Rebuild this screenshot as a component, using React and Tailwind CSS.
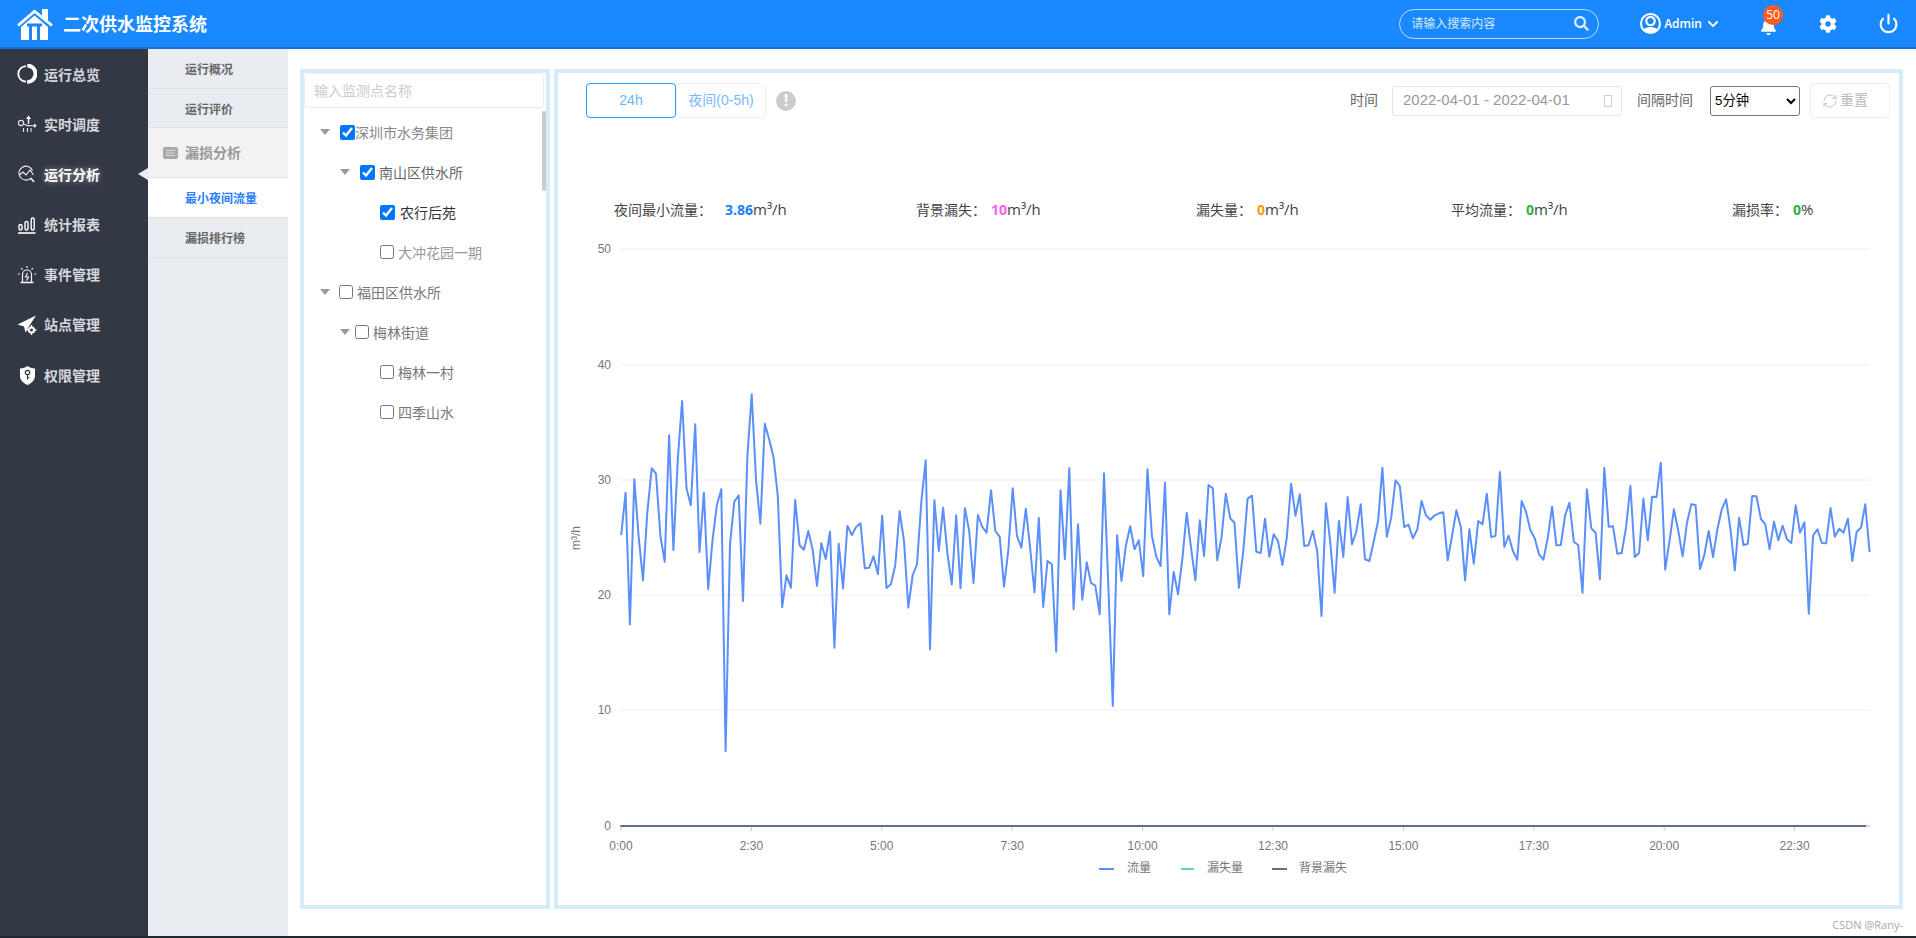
import React from 'react';
import { Power, RefreshCw } from 'lucide-react';
import { FaBell, FaChevronDown, FaCog, FaSearch } from 'react-icons/fa';

// traced flow series, screen y = 380 + a/3 for the first part, 420 + b/3 for the rest
const seriesA = [462,335,730,295,465,598,395,262,278,465,542,163,507,235,60,322,373,130,513,335,624,475,372,325,1110,490,362,343,660,225,40,300,428,128,175,228,345,678,583,620,357,493,506,450,505,615,487,534,452,800,488,622,434,462,438,427,562,560,526,580,404,621,610,552,390,480,680,582,550,360,238,805,358,510,380,520,610,403,622,382,450,606,402,438,455,328,450,467,617,505,322,465,500,383,500,634,410,678,540,550,812,328,535,262,685,430,656,544,606,614,700,277,620,975];
const seriesB = [343,480,375,316,385,358,465,145,345,407,435,185,580,453,520,415,275,380,478,298,405,192,202,418,350,218,292,305,500,390,233,224,392,396,293,407,340,360,432,350,188,284,220,375,373,330,390,585,247,365,515,300,408,228,370,332,250,415,420,360,300,140,347,290,178,195,318,311,352,325,240,283,296,283,277,274,418,345,268,318,478,325,428,300,310,218,348,345,153,378,344,390,416,240,272,327,352,400,416,350,257,373,372,282,245,362,372,515,205,322,335,475,140,317,316,398,396,320,195,408,396,233,358,227,228,125,446,360,265,330,406,305,250,252,444,402,330,408,325,265,235,325,448,290,372,369,225,226,294,310,385,302,358,314,355,366,253,335,304,578,343,325,366,367,261,347,323,335,293,420,333,320,250,393];

const flowPoints = [
  ...seriesA.map((v, i) => `${(621.2 + i * 4.35).toFixed(1)},${(380 + v / 3).toFixed(1)}`),
  ...seriesB.map((v, i) => `${(621.2 + (i + 114) * 4.35).toFixed(1)},${(420 + v / 3).toFixed(1)}`),
].join(' ');

const yTicks = [
  { label: '50', y: 248 },
  { label: '40', y: 364 },
  { label: '30', y: 479 },
  { label: '20', y: 594 },
  { label: '10', y: 709 },
];
const xTicks = ['0:00', '2:30', '5:00', '7:30', '10:00', '12:30', '15:00', '17:30', '20:00', '22:30'];

const OverviewIcon = () => (
  <svg width="20" height="20" viewBox="0 0 20 20" fill="none" stroke="#fff">
    <path d="M9 2.2A7.6 7.6 0 0 0 9 17.6" strokeWidth="1.8" />
    <path d="M11 1.5A8.3 8.3 0 0 1 11 18.3" strokeWidth="4" transform="translate(-.5 0) scale(.98)" />
  </svg>
);
const DispatchIcon = () => (
  <svg width="20" height="20" viewBox="0 0 20 20" fill="none" stroke="#e6e8ec" strokeWidth="1.1">
    <circle cx="4" cy="9" r="2.6" />
    <path d="M6.6 9.5c1.4 2 2.6 2.2 11.4 2.2" />
    <path d="M17 10l2 1.7-2 1.7" fill="#e6e8ec" />
    <path d="M11.5 10V4" strokeWidth="1.6" />
    <path d="M9 5l2.5-3.5L14 5z" fill="#fff" stroke="none" />
    <path d="M6.5 14v4M10.5 14v4M14 14v4" />
  </svg>
);
const AnalysisIcon = () => (
  <svg width="18" height="18" viewBox="0 0 18 18" fill="none" stroke="#f0f1f3" strokeWidth="1.1">
    <path d="M14.5 5.5A7 7 0 1 0 12.5 13.5" />
    <path d="M1.5 10l3.5-3 3 3 4-5 3.5 5" />
    <path d="M12.5 13l3.5 3.8" strokeWidth="1.7" />
  </svg>
);
const ReportIcon = () => (
  <svg width="20" height="20" viewBox="0 0 20 20" fill="none" stroke="#fff" strokeWidth="1.4">
    <rect x="2" y="9.5" width="3" height="5.5" rx="1.5" />
    <rect x="8" y="6.5" width="3" height="8.5" rx="1.5" />
    <rect x="14.2" y="3" width="3" height="12" rx="1.5" />
    <path d="M1 18h17.5" strokeWidth="1.6" />
  </svg>
);
const EventIcon = () => (
  <svg width="20" height="20" viewBox="0 0 20 20" fill="none" stroke="#f0f1f3" strokeWidth="1.2">
    <path d="M5.5 17V9.5a4.5 4.5 0 0 1 9 0V17" />
    <path d="M3.5 17.5h13" strokeWidth="1.6" />
    <path d="M10.6 8L8.5 12h3l-2 3.5" />
    <path d="M10 1v2M4.2 3l1.2 1.6M15.8 3l-1.2 1.6M.8 9h2M17.2 9h2" />
  </svg>
);
const SiteIcon = () => (
  <svg width="20" height="20" viewBox="0 0 20 20">
    <path d="M19 .5L.5 9.5l6.5 2 1.5 6 2.5-4.5L19 .5z" fill="#fff" />
    <circle cx="14.5" cy="15" r="3.6" fill="#fff" />
    <circle cx="14.5" cy="15" r="1.5" fill="#333845" />
    <path d="M14.5 10v2M14.5 18v2M9.5 15h2M17.5 15h2" stroke="#fff" strokeWidth="1.4" />
  </svg>
);
const AuthIcon = () => (
  <svg width="15" height="19" viewBox="0 0 15 19">
    <path d="M7.5 0C5.5 1.5 3 2.2 0 2.4v7.5c0 4 3 7 7.5 9 4.5-2 7.5-5 7.5-9V2.4C12 2.2 9.5 1.5 7.5 0z" fill="#fff" />
    <circle cx="7.5" cy="6.5" r="2.2" fill="none" stroke="#333845" strokeWidth="1.2" />
    <path d="M7.5 8.5v5M7.5 11.5h1.8" stroke="#333845" strokeWidth="1.2" />
  </svg>
);

const navItems = [
  { label: '运行总览', icon: <OverviewIcon /> },
  { label: '实时调度', icon: <DispatchIcon /> },
  { label: '运行分析', icon: <AnalysisIcon />, active: true },
  { label: '统计报表', icon: <ReportIcon /> },
  { label: '事件管理', icon: <EventIcon /> },
  { label: '站点管理', icon: <SiteIcon /> },
  { label: '权限管理', icon: <AuthIcon /> },
];

const Logo = () => (
  <svg width="38" height="33" viewBox="0 0 38 33">
    <path d="M1 17.5L18.5 2.5 26 8.5V2h6v11.5l5 4-2 2L18.5 6 3 19.5z" fill="#fff" />
    <path d="M5 20L18.5 8.5 32 20v12.5a.8.8 0 0 1-.8.8H5.8a.8.8 0 0 1-.8-.8z" fill="#fff" />
    <path d="M11 16.5h15v3h-2V33h-3V19.5h-5V33h-3V19.5h-2z" fill="#1a88ff" />
  </svg>
);

const UserIcon = () => (
  <svg width="21" height="21" viewBox="0 0 21 21">
    <circle cx="10.5" cy="10.5" r="9.5" fill="none" stroke="#fff" strokeWidth="2" />
    <circle cx="10.5" cy="8" r="4.2" fill="none" stroke="#fff" strokeWidth="2.2" />
    <path d="M3.5 16.5c2-3.5 12-3.5 14 0l-3.500 3h-7z" fill="#fff" />
  </svg>
);

const Header = () => (
  <header className="h-[49px] shrink-0 bg-[#1a88ff] border-b-2 border-[#1b6fd1] flex items-center text-white">
    <div className="ml-[16px] w-[38px] h-[33px]">
      <Logo />
    </div>
    <h1 className="ml-[9px] text-[18px] font-bold leading-none">二次供水监控系统</h1>
    <div className="ml-auto w-[200px] h-[30px] rounded-full border border-white/70 flex items-center pl-[11px] pr-[9px]">
      <span className="text-[12px] text-[#d5e8ff]">请输入搜索内容</span>
      <FaSearch className="ml-auto text-[#d5e8ff]" size={15} />
    </div>
    <div className="ml-[41px] flex items-center">
      <UserIcon />
      <span className="ml-[3px] text-[12px] font-semibold">Admin</span>
      <FaChevronDown className="ml-[5px]" size={12} />
    </div>
    <div className="relative ml-[41px] w-[17px] h-[18px] mt-[7px]">
      <FaBell size={17} />
      <span className="absolute left-[3px] top-[-13px] w-[20px] h-[20px] rounded-full bg-[#ff5a1f] text-[12px] leading-[20px] text-center">50</span>
    </div>
    <FaCog className="ml-[42px]" size={18} />
    <Power className="ml-[41px] mr-[17px]" size={21} strokeWidth={2.5} />
  </header>
);

const Sidebar = () => (
  <aside className="w-[148px] shrink-0 bg-[#333845]">
    {navItems.map((item) => (
      <div key={item.label} className="relative h-[50.17px] flex items-center">
        <span className="w-[20px] h-[20px] ml-[17px] flex items-center justify-center">{item.icon}</span>
        <span className={`ml-[7px] text-[14px] font-bold ${item.active ? 'text-white [text-shadow:0_0_6px_rgba(255,255,255,0.5)]' : 'text-[#d5d7dc]'}`}>
          {item.label}
        </span>
        {item.active && (
          <span className="absolute right-0 top-[19px] border-y-[6px] border-r-[10px] border-y-transparent border-r-[#e9ecf1]" />
        )}
      </div>
    ))}
  </aside>
);

const SubRow = ({ label, active, short }) => (
  <div className={`${short ? 'h-[39px]' : 'h-[40px]'} flex items-center pl-[37px] pt-[3px] border-b border-[#dfe2e7] text-[12px] font-bold ${active ? 'bg-white text-[#2b7cff]' : 'text-[#666]'}`}>
    {label}
  </div>
);

const SubMenu = () => (
  <nav className="w-[140px] shrink-0 bg-[#e9ecf1]">
    <SubRow label="运行概况" />
    <SubRow label="运行评价" short />
    <div className="h-[50px] bg-[#f2f2f3] border-b border-[#e4e4e6] flex items-center pl-[15px] text-[14px] font-bold text-[#999]">
      <svg width="15" height="12" viewBox="0 0 15 12">
        <rect width="15" height="12" rx="2" fill="#a9a9a9" />
        <path d="M3 3.5h9M3 6h9M3 8.5h9" stroke="#d8d8d8" strokeWidth="1" />
      </svg>
      <span className="ml-[7px]">漏损分析</span>
    </div>
    <SubRow label="最小夜间流量" active />
    <SubRow label="漏损排行榜" />
  </nav>
);

const Caret = () => <span className="w-0 h-0 border-x-[5.5px] border-t-[6px] border-x-transparent border-t-[#999]" />;

const Tree = () => (
  <div className="relative w-[250px] h-[840px] border-4 border-[#d6ecfb]">
    <div className="h-[35px] mr-[2px] border border-[#eeeeee] rounded-[3px] flex items-center pl-[9px] text-[14px] text-[#cccccc]">
      输入监测点名称
    </div>
    <span className="absolute right-0 top-[38px] w-[4px] h-[80px] rounded-full bg-[#cccccc]" />
    <div className="pt-[4px] text-[14px]">
      <div className="h-[40px] flex items-center pl-[16px] text-[#888]">
        <Caret />
        <input type="checkbox" checked readOnly className="ml-[10px] w-[15px] h-[15px]" />
        <span>深圳市水务集团</span>
      </div>
      <div className="h-[40px] flex items-center pl-[36px] text-[#666]">
        <Caret />
        <input type="checkbox" checked readOnly className="ml-[10px] w-[15px] h-[15px]" />
        <span className="ml-[4px]">南山区供水所</span>
      </div>
      <div className="h-[40px] flex items-center pl-[76px] text-[#333]">
        <input type="checkbox" checked readOnly className="w-[15px] h-[15px]" />
        <span className="ml-[5px]">农行后苑</span>
      </div>
      <div className="h-[40px] flex items-center pl-[76px] text-[#999]">
        <input type="checkbox" readOnly className="w-[14px] h-[14px]" />
        <span className="ml-[4px]">大冲花园一期</span>
      </div>
      <div className="h-[40px] flex items-center pl-[16px] text-[#777]">
        <Caret />
        <input type="checkbox" readOnly className="ml-[9px] w-[14px] h-[14px]" />
        <span className="ml-[4px]">福田区供水所</span>
      </div>
      <div className="h-[40px] flex items-center pl-[36px] text-[#777]">
        <Caret />
        <input type="checkbox" readOnly className="ml-[5px] w-[14px] h-[14px]" />
        <span className="ml-[4px]">梅林街道</span>
      </div>
      <div className="h-[40px] flex items-center pl-[76px] text-[#777]">
        <input type="checkbox" readOnly className="w-[14px] h-[14px]" />
        <span className="ml-[4px]">梅林一村</span>
      </div>
      <div className="h-[40px] flex items-center pl-[76px] text-[#777]">
        <input type="checkbox" readOnly className="w-[14px] h-[14px]" />
        <span className="ml-[4px]">四季山水</span>
      </div>
    </div>
  </div>
);

const Toolbar = () => (
  <div className="flex items-center h-[35px] pl-[28px] pr-[9px] text-[14px] font-['Liberation_Sans','Noto_Sans_CJK_SC',sans-serif]">
    <button className="w-[90px] h-[35px] border border-[#1aa1ff] rounded-[4px] text-[#6db3ff]">24h</button>
    <button className="w-[90px] h-[35px] border border-[#f0f0f0] rounded-[4px] text-[#7ab8ff]">夜间(0-5h)</button>
    <span className="ml-[10px] w-[20px] h-[20px] rounded-full bg-[#cccccc] text-white font-bold text-[17px] leading-[20px] text-center">!</span>
    <span className="ml-auto text-[#666]">时间</span>
    <div className="ml-[14px] w-[230px] h-[30px] border border-[#e5e5e5] rounded-[3px] flex items-center pl-[10px] text-[#999]">
      <span className="text-[15px]">2022-04-01 - 2022-04-01</span>
      <span className="ml-auto mr-[9px] w-[8px] h-[12px] border border-[#cccccc]" />
    </div>
    <span className="ml-[15px] text-[#666]">间隔时间</span>
    <select defaultValue="5" className="ml-[17px] w-[90px] h-[30px] border border-[#767676] rounded-[3px] bg-white text-[13.33px] text-black">
      <option value="5">5分钟</option>
    </select>
    <button className="ml-[10px] w-[80px] h-[35px] border border-[#eeeeee] rounded-[4px] flex items-center pl-[11px] text-[#bbbbbb]">
      <RefreshCw size={16} strokeWidth={1.3} />
      <span className="ml-[2px]">重置</span>
    </button>
  </div>
);

const Stats = () => (
  <div className="mt-[79px] flex items-center h-[24px] pl-[56px] text-[14px] text-[#444]">
    <div className="w-[302px] flex items-baseline">
      <span>夜间最小流量：</span>
      <b className="ml-[13px] text-[#1a7fff]">3.86</b>
      <span className="text-[15px]">m³/h</span>
    </div>
    <div className="w-[280px] flex items-baseline">
      <span>背景漏失：</span>
      <b className="ml-[5px] text-[#ff5ef2]">10</b>
      <span className="text-[15px]">m³/h</span>
    </div>
    <div className="w-[255px] flex items-baseline">
      <span>漏失量：</span>
      <b className="ml-[5px] text-[#ff9a0a]">0</b>
      <span className="text-[15px]">m³/h</span>
    </div>
    <div className="w-[281px] flex items-baseline">
      <span>平均流量：</span>
      <b className="ml-[5px] text-[#2cb34a]">0</b>
      <span className="text-[15px]">m³/h</span>
    </div>
    <div className="flex items-baseline">
      <span>漏损率：</span>
      <b className="ml-[5px] text-[#2cb34a]">0</b>
      <span className="text-[15px]">%</span>
    </div>
  </div>
);

const Chart = () => (
  <svg className="block mt-[10px]" width="1341" height="660" viewBox="558 230 1341 660" fontFamily="'Liberation Sans','Noto Sans CJK SC',sans-serif" fontSize="12" fill="#777">
    {yTicks.map((t) => (
      <g key={t.label}>
        <line x1="620" x2="1870" y1={t.y} y2={t.y} stroke="#eeeeee" />
        <text x="611" y={t.y + 4} textAnchor="end">{t.label}</text>
      </g>
    ))}
    <text x="611" y="829" textAnchor="end">0</text>
    <line x1="620" x2="1870" y1="825" y2="825" stroke="#d9d9d9" strokeWidth="2" />
    {xTicks.map((label, i) => (
      <g key={label}>
        <line x1={621 + i * 130.4} x2={621 + i * 130.4} y1="825" y2="830" stroke="#cccccc" />
        <text x={621 + i * 130.4} y="849" textAnchor="middle">{label}</text>
      </g>
    ))}
    <text transform="translate(580 537) rotate(-90)" textAnchor="middle">m³/h</text>
    <polyline points={flowPoints} fill="none" stroke="#5b8ff9" strokeWidth="2" strokeLinejoin="round" />
    <line x1="620.5" x2="1866" y1="825" y2="825" stroke="#5d7092" strokeWidth="2" />
    <line x1="1099" x2="1114" y1="868" y2="868" stroke="#5b8ff9" strokeWidth="2" />
    <text x="1127" y="871">流量</text>
    <line x1="1181" x2="1194" y1="868" y2="868" stroke="#5ad8a6" strokeWidth="2" />
    <text x="1207" y="871">漏失量</text>
    <line x1="1272" x2="1287" y1="868" y2="868" stroke="#5d7092" strokeWidth="2" />
    <text x="1299" y="871">背景漏失</text>
  </svg>
);

const App = () => (
  <div className="h-screen w-full flex flex-col overflow-hidden bg-white font-['Open_Sans','Noto_Sans_CJK_SC',sans-serif]">
    <Header />
    <div className="flex-1 flex min-h-0">
      <Sidebar />
      <SubMenu />
      <main className="flex-1 flex flex-col pl-[12px] pt-[20px]">
        <div className="flex gap-[4px]">
          <Tree />
          <section className="w-[1349px] h-[840px] border-4 border-[#d6ecfb] pt-[10px]">
            <Toolbar />
            <Stats />
            <Chart />
          </section>
        </div>
        <div className="w-[1603px] mt-[8px] text-right text-[11px] text-[#aaaaaa]">CSDN @Rany-</div>
      </main>
    </div>
    <div className="h-[2px] shrink-0 bg-[#1e2a30]" />
  </div>
);

export default App;
